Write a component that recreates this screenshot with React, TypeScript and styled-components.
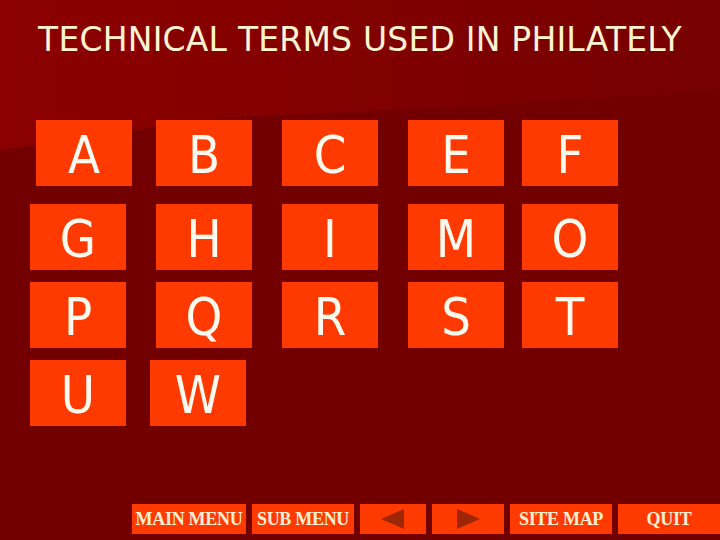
import React from "react";
import styled, { createGlobalStyle } from "styled-components";

const Global = createGlobalStyle`
  html, body { margin: 0; padding: 0; background: #730000; overflow: hidden; }
`;

const Page = styled.div`
  position: relative;
  width: 720px;
  height: 540px;
  display: flex;
  flex-direction: column;
  background: #730000;
  overflow: hidden;
  &::before {
    content: "";
    position: absolute;
    inset: 0;
    background: linear-gradient(to right, #8c0000 0%, #840000 40%, #7b0000 75%, #770000 100%);
    clip-path: polygon(0 0, 100% 0, 100% 90px, 60% 108px, 30% 118px, 0 150px);
  }
`;

const Title = styled.h1`
  position: relative;
  margin: 0;
  padding-top: 21px;
  font-family: "DejaVu Sans", "Liberation Sans", sans-serif;
  font-weight: normal;
  font-size: 33px;
  line-height: 38px;
  color: #fff4d2;
  text-align: center;
  letter-spacing: 0.2px;
`;

const Board = styled.div`
  position: relative;
  margin: 61px 0 0 30px;
  display: grid;
  grid-template-columns: 96px 30px 96px 30px 96px 30px 96px 18px 96px;
  grid-template-rows: 66px 18px 66px 12px 66px 12px 66px;
`;

const Tile = styled.div<{ $col: number; $row: number; $nudge: number }>`
  grid-column: ${(p) => p.$col * 2 + 1};
  grid-row: ${(p) => p.$row * 2 + 1};
  width: 96px;
  height: 66px;
  margin-left: ${(p) => p.$nudge}px;
  background: #ff3a00;
  display: flex;
  align-items: center;
  justify-content: center;
  font-family: "DejaVu Sans Condensed", "DejaVu Sans", "Liberation Sans", sans-serif;
  font-stretch: condensed;
  font-size: 52px;
  line-height: 1;
  color: #fffaf0;
  padding-top: 3px;
  box-sizing: border-box;
`;

const Footer = styled.div`
  position: relative;
  margin-top: auto;
  padding: 0 0 6px 132px;
  display: flex;
  gap: 6px;
`;

const NavButton = styled.div<{ $w: number }>`
  width: ${(p) => p.$w}px;
  height: 30px;
  flex: none;
  background: #ff3a00;
  display: flex;
  align-items: center;
  justify-content: center;
  font-family: "Liberation Serif", "Times New Roman", serif;
  font-weight: bold;
  font-size: 18px;
  letter-spacing: -0.3px;
  color: #ffefd2;
  white-space: nowrap;
`;

const Arrow = ({ dir }: { dir: "left" | "right" }) => (
  <svg width="24" height="20" viewBox="0 0 24 20">
    {dir === "left" ? (
      <polygon points="0,10 23,0 23,20" fill="#9c2606" />
    ) : (
      <polygon points="1,0 24,10 1,20" fill="#9c2606" />
    )}
  </svg>
);

const tiles: { l: string; c: number; r: number; n?: number }[] = [
  { l: "A", c: 0, r: 0, n: 6 },
  { l: "B", c: 1, r: 0 },
  { l: "C", c: 2, r: 0 },
  { l: "E", c: 3, r: 0 },
  { l: "F", c: 4, r: 0 },
  { l: "G", c: 0, r: 1 },
  { l: "H", c: 1, r: 1 },
  { l: "I", c: 2, r: 1 },
  { l: "M", c: 3, r: 1 },
  { l: "O", c: 4, r: 1 },
  { l: "P", c: 0, r: 2 },
  { l: "Q", c: 1, r: 2 },
  { l: "R", c: 2, r: 2 },
  { l: "S", c: 3, r: 2 },
  { l: "T", c: 4, r: 2 },
  { l: "U", c: 0, r: 3 },
  { l: "W", c: 1, r: 3, n: -6 },
];

export default function App() {
  return (
    <Page>
      <Global />
      <Title>TECHNICAL TERMS USED IN PHILATELY</Title>
      <Board>
        {tiles.map((t) => (
          <Tile key={t.l} $col={t.c} $row={t.r} $nudge={t.n ?? 0}>
            {t.l}
          </Tile>
        ))}
      </Board>
      <Footer>
        <NavButton $w={114}>MAIN MENU</NavButton>
        <NavButton $w={102}>SUB MENU</NavButton>
        <NavButton $w={66}>
          <Arrow dir="left" />
        </NavButton>
        <NavButton $w={72}>
          <Arrow dir="right" />
        </NavButton>
        <NavButton $w={102}>SITE MAP</NavButton>
        <NavButton $w={102}>QUIT</NavButton>
      </Footer>
    </Page>
  );
}
